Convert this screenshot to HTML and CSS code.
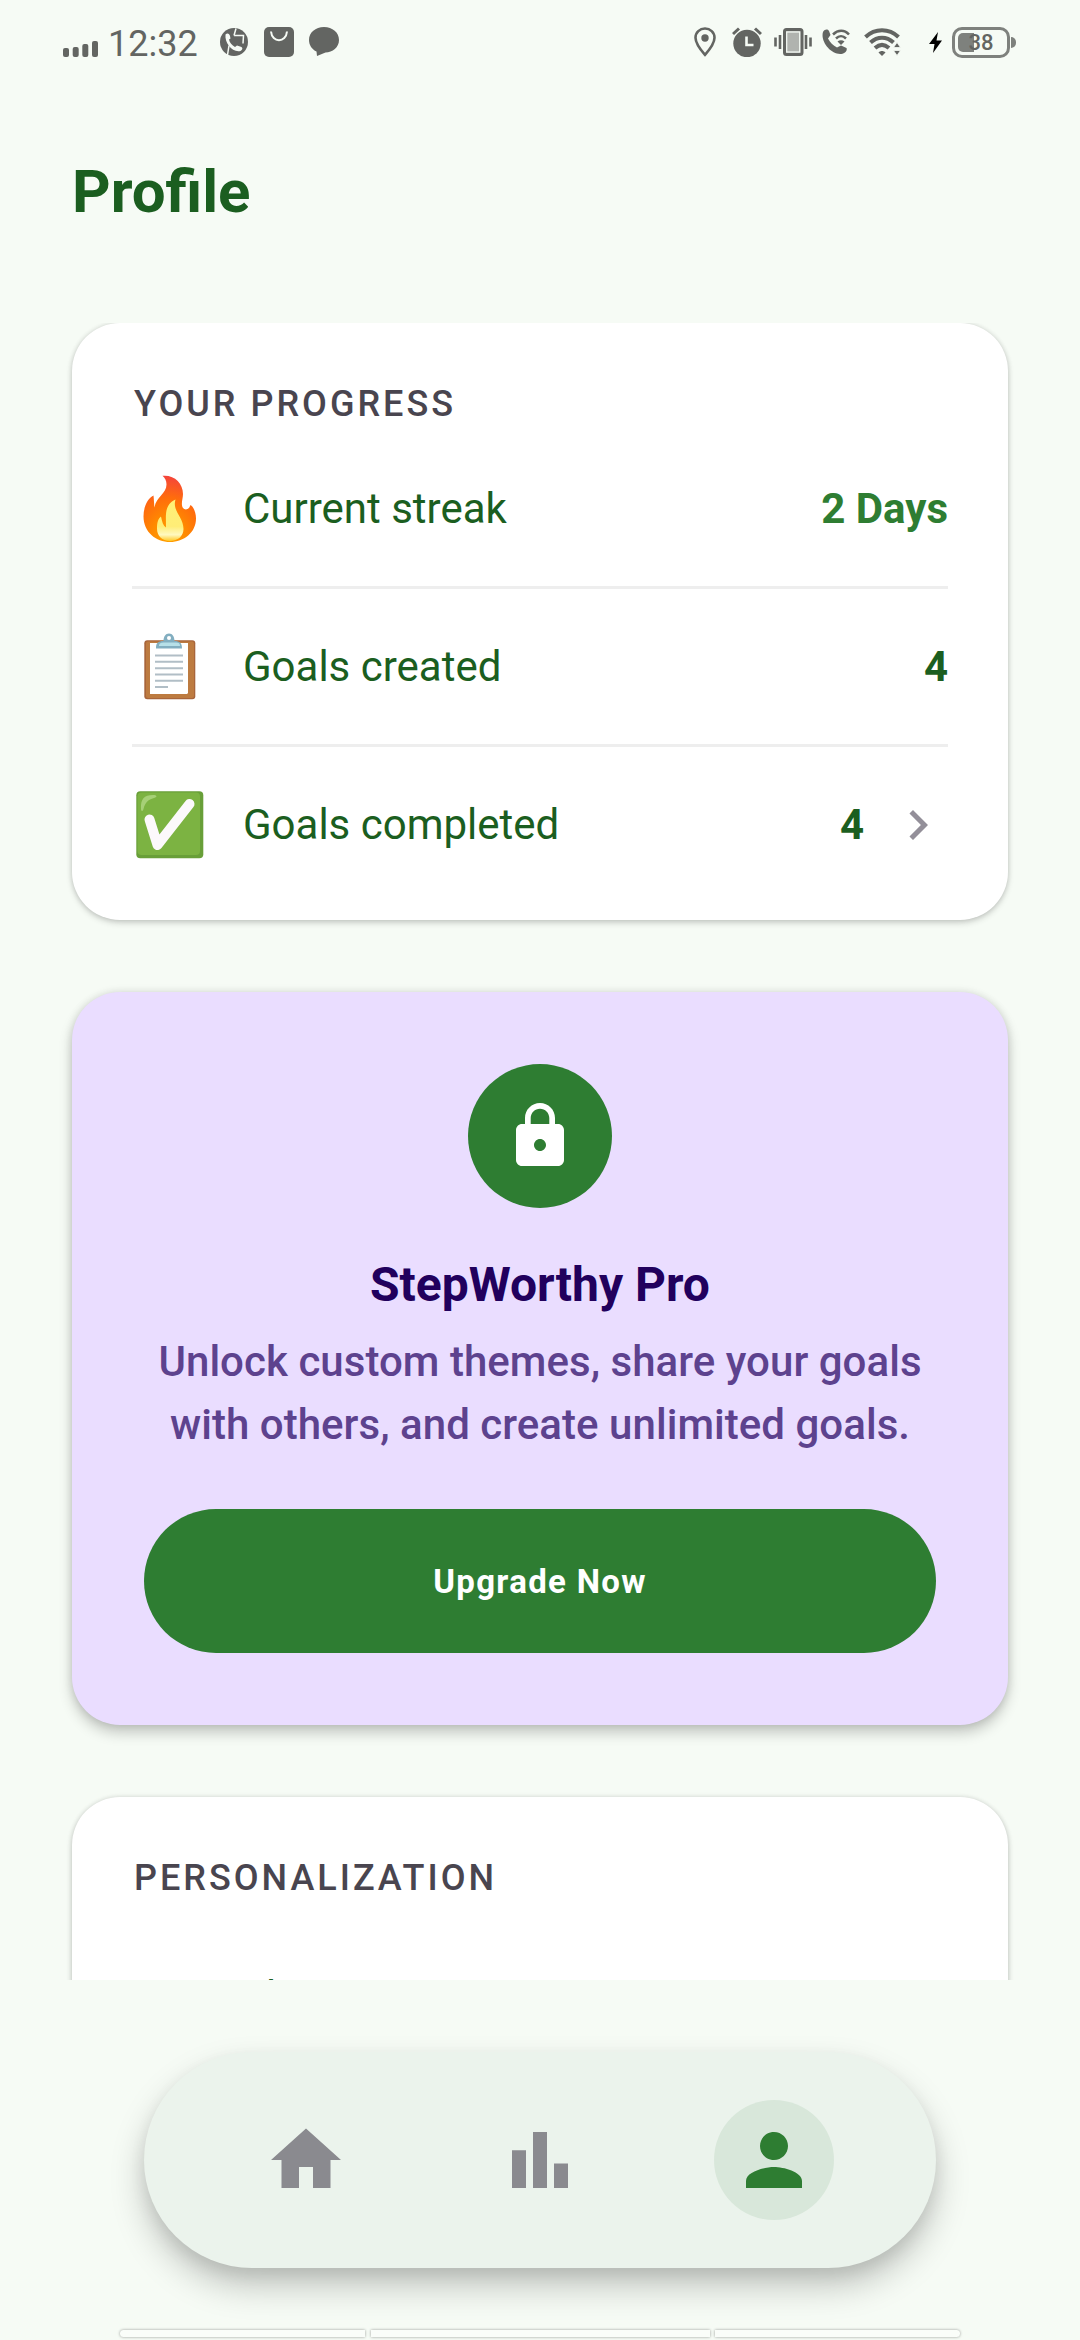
FILE: index.html
```html
<!DOCTYPE html>
<html lang="en">
<head>
<meta charset="utf-8">
<title>Profile</title>
<link rel="stylesheet" href="styles.css">
</head>
<body>
<div class="screen">
  <header class="status">
    <svg class="signal" width="36" height="28" viewBox="0 0 36 28" fill="#636562"><rect x="0" y="19" width="6" height="9" rx="2"/><rect x="9.700" y="18" width="6" height="10" rx="2"/><rect x="19.300" y="15" width="6" height="13" rx="2"/><rect x="29" y="12" width="6" height="16" rx="2"/></svg>
    <span class="clock">12:32</span>
    <svg class="i-call" width="28" height="28" viewBox="0 0 28 28"><circle cx="14" cy="14" r="14" fill="#636562"/><path d="M5.500 6.500c2-2 4-.5 4.500 1.500l.5 2.500-1.500 1c.5 3 3 6 6 7.500l2-1.500 4.500 1.500c1.500 1 1 3-1 4-8 2-16-8-15-16.500z" fill="#f6fbf5"/><path d="M14 7.500h9.500l-.5 8M16 .5l-2 7M9 17.500L7.500 27" fill="none" stroke="#f6fbf5" stroke-width="1.500"/></svg>
    <svg class="i-bag" width="30" height="30" viewBox="0 0 30 30"><rect width="30" height="30" rx="5" fill="#636562"/><path d="M7 4.500c1 11.500 15 11.500 16 0" fill="none" stroke="#f6fbf5" stroke-width="2"/></svg>
    <svg class="i-chat" width="30" height="30" viewBox="0 0 30 30"><path d="M15 0c8.500 0 15 5.500 15 13s-6.500 12.500-13.500 12.500L8 29l-.5-4.500C3 22.500 0 18 0 13 0 5.500 6.500 0 15 0z" fill="#636562"/></svg>
    <span class="grow"></span>
    <svg class="i-pin" width="22" height="30" viewBox="0 0 22 30"><path d="M11 1.500c-5.200 0-9.500 4-9.500 9.200C1.500 17 11 27.800 11 27.800s9.500-10.800 9.500-17.100c0-5.200-4.300-9.200-9.500-9.200z" fill="none" stroke="#636562" stroke-width="2.600"/><circle cx="11" cy="11" r="3.700" fill="#636562"/></svg>
    <svg class="i-alarm" width="30" height="30" viewBox="0 0 30 30"><circle cx="15" cy="16.500" r="13.700" fill="#636562"/><path d="M1 7l6-5.500M29 7l-6-5.500" stroke="#636562" stroke-width="3"/><path d="M14.500 9.500v8.500h7" fill="none" stroke="#f6fbf5" stroke-width="2.600"/></svg>
    <svg class="i-vib" width="38" height="28" viewBox="0 0 38 28"><rect x="10.500" y="1.500" width="17.500" height="25" rx="2" fill="#b0b3af" stroke="#636562" stroke-width="3"/><rect x="12.700" y="4" width="13" height="20" fill="none" stroke="#f6fbf5" stroke-width="1.200"/><path d="M1.500 9.500v9M36.500 9.500v9" stroke="#636562" stroke-width="2.600"/><path d="M6 7v14M32 7v14" stroke="#636562" stroke-width="2.600"/></svg>
    <svg class="i-wcall" width="28" height="26" viewBox="0 0 28 26"><path d="M1 3C3 0 5.500 0 7 2l1.500 4L6 9.500c2 4 5 7 9 9l4-2 5.500 2.500c1 2-1 5-4 5.700C10 27-2 13 1 3z" fill="#636562"/><path d="M11 5.500c5-5 11.500-5 16 0M14 9.500c3-3 7-3 10 0" fill="none" stroke="#636562" stroke-width="2.500"/><path d="M15.500 12.500c2-1.800 5-1.800 7 0L19 16z" fill="#636562"/></svg>
    <svg class="i-wifi" width="38" height="28" viewBox="0 0 38 28"><path d="M1.500 9c9.500-9 23.500-9 33 0M6.500 14.500c7-6.500 16-6.500 23 0M11 20c4.500-4 9.500-4 14 0" fill="none" stroke="#636562" stroke-width="4"/><path d="M14.500 24.500c2-2 5-2 7 0L18 28z" fill="#636562"/><path d="M29.500 19.500l3.500-5 3.500 5zM29.500 22.500l3.500 5 3.500-5z" fill="#636562" stroke="#f6fbf5" stroke-width=".8"/></svg>
    <svg class="i-bolt" width="13" height="21" viewBox="0 0 13 21"><path d="M9 0L0 12h5.500L4 21l9-12.500H7.500z"/></svg>
    <div class="battery"><span class="level"></span><span class="pct">38</span></div>
    <span class="nub"></span>
  </header>

  <h1>Profile</h1>

  <main class="scroll">
    <section class="card progress">
      <h2>YOUR PROGRESS</h2>
      <div class="row">
        <svg class="emoji" viewBox="0 0 68 68"><defs><radialGradient id="f1" cx=".48" cy=".95" r=".95"><stop offset="0" stop-color="#ffa000"/><stop offset=".35" stop-color="#ff8a00"/><stop offset=".65" stop-color="#ff6d0c"/><stop offset="1" stop-color="#f4433c"/></radialGradient><linearGradient id="f2" x1="0" y1="0" x2="0" y2="1"><stop offset="0" stop-color="#fff176"/><stop offset=".65" stop-color="#ffed77"/><stop offset=".85" stop-color="#fff9c0"/><stop offset="1" stop-color="#ffca28"/></linearGradient></defs><path d="M26.500.8C38-.5 47 8 47 19c0 5-2.500 10 0 14 2 2.500 6 1.500 7-2l.5-1C57 31 60 37 60 43.500 60 57.500 48 67 34 67S7.500 57 7.500 41.500C7.500 32 11.500 23.500 17.500 20.500c.5 4 .5 9 1 12C20 22 30.500 18.500 30.500 9.500 30.500 5.500 29 3 26.500.8z" fill="url(#f1)"/><path d="M39.500 24.500C36 36 47.500 42 47.500 54c0 7-5.500 12-13.500 12s-13-5-13-12.500c0-6 1-9.500 4-12 1 5 2 9 5 11C30 40 28 30 39.500 24.500z" fill="url(#f2)"/></svg>
        <span class="label">Current streak</span><span class="value bright">2 Days</span>
      </div>
      <div class="row">
        <svg class="emoji" viewBox="0 0 68 68"><rect x="8.300" y="7.300" width="51" height="59" rx="3" fill="#a8653b"/><rect x="10" y="8.500" width="48" height="56.500" rx="2" fill="#bd7b40"/><path d="M14 10h38v50l-1 1H14z" fill="#fff"/><path d="M19 22.500h28M19 28.700h28M19 35.200h28M19 41.500h28M19 47.800h28M19 54h13" stroke="#b1bec6" stroke-width="1.900"/><path d="M20 15c0-5 2-7 7.500-7 0-4 2-7.500 5.500-7.500s5.500 3.500 5.500 7.500c5.500 0 7.500 2 7.500 7.500H20z" fill="#82aec0"/><path d="M23 13c0-3 2-3.500 5-3.500h12c3 0 4 1 4 3.500z" fill="#b7e0e8"/><circle cx="33" cy="5" r="2" fill="#fff"/></svg>
        <span class="label">Goals created</span><span class="value">4</span>
      </div>
      <div class="row">
        <svg class="emoji" viewBox="0 0 68 68"><rect x=".3" y=".3" width="67" height="67" rx="4" fill="#689f38"/><rect x="1.500" y="1.500" width="62.500" height="62.500" rx="4" fill="#7cb342"/><path d="M13.500 28.500L21.500 54 53.500 13" fill="none" stroke="#fcf9fb" stroke-width="10" stroke-linecap="round" stroke-linejoin="round"/><path d="M5 18C4.500 8 8 4 17 4c4 0 5 2 1 3C12 8.500 9 12 7.500 18c-.5 2.500-2.500 2.500-2.500 0z" fill="#b4d98a" opacity=".75"/></svg>
        <span class="label">Goals completed</span><span class="value">4</span>
        <svg class="chev" width="60" height="60" viewBox="0 0 24 24"><path d="M10 6L8.590 7.410 13.170 12l-4.580 4.590L10 18l6-6z" fill="#938f99"/></svg>
      </div>
    </section>

    <section class="card pro">
      <div class="lock"><svg width="72" height="72" viewBox="0 0 24 24" fill="#fff"><path d="M18 8h-1V6c0-2.760-2.240-5-5-5S7 3.240 7 6v2H6c-1.100 0-2 .9-2 2v10c0 1.100.9 2 2 2h12c1.100 0 2-.9 2-2V10c0-1.100-.9-2-2-2zm-6 9c-1.100 0-2-.9-2-2s.9-2 2-2 2 .9 2 2-.9 2-2 2zm3.100-9H8.900V6c0-1.710 1.390-3.100 3.100-3.100 1.710 0 3.100 1.390 3.100 3.100v2z"/></svg></div>
      <h3>StepWorthy Pro</h3>
      <p>Unlock custom themes, share your goals<br>with others, and create unlimited goals.</p>
      <button>Upgrade Now</button>
    </section>

    <section class="card personal">
      <h2>PERSONALIZATION</h2>
      <div class="row theme"><span class="label">Change icon</span></div>
    </section>
  </main>

  <div class="bottom">
    <nav class="nav">
      <span class="tab"><svg width="84" height="84" viewBox="0 0 24 24" fill="#8a8a8f"><path d="M10 20v-6h4v6h5v-8h3L12 3 2 12h3v8z"/></svg></span>
      <span class="tab"><svg width="84" height="84" viewBox="0 0 24 24" fill="#8a8a8f"><path d="M6.400 9.200h4V20h-4zM18.400 13h4v7h-4zM12.400 4h4v16h-4z" transform="translate(-2.400)"/></svg></span>
      <span class="tab active"><svg width="84" height="84" viewBox="0 0 24 24" fill="#2e7d32"><path d="M12 12c2.210 0 4-1.790 4-4s-1.790-4-4-4-4 1.790-4 4 1.790 4 4 4zm0 2c-2.670 0-8 1.340-8 4v2h16v-2c0-2.660-5.330-4-8-4z"/></svg></span>
    </nav>
    <div class="handle"><span></span><span></span><span></span></div>
  </div>
</div>
</body>
</html>
```
FILE: styles.css
```css
* { box-sizing: border-box; }
body { margin: 0; background: #f6fbf5; font-family: Roboto, sans-serif; }
svg { display: block; flex: none; }
h1, h2, h3, p { margin: 0; }
.screen { width: 1080px; height: 2340px; display: flex; flex-direction: column; overflow: hidden; }

.status { height: 84px; flex: none; display: flex; align-items: center; padding: 0 64px 0 63px; color: #636562; }
.signal { margin-top: 1px; }
.clock { width: 90px; font-size: 36px; margin-left: 9px; line-height: 44px; margin-top: 3px; }
.i-call { margin-left: 22px; }
.i-bag { margin-left: 16px; }
.i-chat { margin-left: 15px; }
.grow { flex: 1; }
.i-alarm { margin-left: 16px; }
.i-vib { margin-left: 12px; }
.i-wcall { margin-left: 10px; }
.i-wifi { margin-left: 14px; }
.i-bolt { margin-left: 27px; }
.battery { width: 58px; height: 31px; margin-left: 10px; border: 3px solid #7e817d; border-radius: 10px; padding: 3px; display: grid; align-items: center; }
.battery span { grid-area: 1 / 1; }
.level { width: 16px; height: 19px; background: #7e817d; border-radius: 5px 0 0 5px; }
.pct { font-size: 22px; line-height: 19px; font-weight: 500; text-align: center; }
.nub { width: 5px; height: 11px; margin-left: 1px; background: #7e817d; border-radius: 0 6px 6px 0; }

h1 { flex: none; height: 239px; padding: 72px 72px 0; font-size: 60px; line-height: 72px; font-weight: 700; color: #1b5e20; }

.scroll { height: 1657px; flex: none; overflow: hidden; padding: 0 72px; display: flex; flex-direction: column; gap: 72px; }
.card { flex: none; background: #fff; border-radius: 48px; box-shadow: 0 3px 6px rgba(0,0,0,.16), 0 0 5px rgba(0,0,0,.12); }
.progress { height: 597px; padding: 0 60px; }
h2 { padding: 60px 0 0 2px; height: 108px; font-size: 36px; line-height: 42px; font-weight: 500; letter-spacing: 3px; color: #49454f; white-space: nowrap; }
.row { height: 158px; display: flex; align-items: center; border-bottom: 3px solid #eee; color: #1b5e20; font-size: 42px; }
.row:last-child { border-bottom: 0; height: 155px; }
.emoji { width: 68px; height: 68px; margin-left: 4px; }
.label { margin-left: 39px; flex: 1; }
.value { font-weight: 700; }
.bright { color: #2e7d32; }
.chev { margin-left: 24px; }

.pro { height: 733px; background: #eaddff; padding: 72px; display: flex; flex-direction: column; align-items: center; box-shadow: 0 8px 14px rgba(0,0,0,.2), 0 0 8px rgba(0,0,0,.12); }
.lock { width: 144px; height: 144px; border-radius: 50%; background: #2e7d32; display: flex; align-items: center; justify-content: center; }
h3 { margin-top: 49px; font-size: 48px; line-height: 56px; font-weight: 700; color: #21005d; white-space: nowrap; }
p { margin-top: 17px; font-size: 42px; line-height: 63px; font-weight: 500; letter-spacing: .04px; color: #5d428e; text-align: center; white-space: nowrap; }
button { margin-top: auto; width: 792px; height: 144px; border: 0; border-radius: 72px; background: #2e7d32; color: #fff; font: 700 33px Roboto, sans-serif; letter-spacing: 1.300px; }
.personal { height: 400px; padding: 0 60px; }
.theme { margin-top: 14px; }
.theme .label { margin-left: 107px; }

.bottom { flex: 1; padding: 72px 120px 0; }
.nav { width: 792px; height: 216px; margin: 0 auto; border-radius: 108px; background: #ebf3ec; display: flex; align-items: center; justify-content: space-between; padding: 0 102px; box-shadow: 0 18px 34px rgba(0,0,0,.22), 0 8px 16px rgba(0,0,0,.08); }
.tab { width: 120px; height: 120px; border-radius: 50%; display: flex; align-items: center; justify-content: center; }
.active { background: #d8e7da; }
.handle { display: flex; justify-content: space-between; margin-top: 62px; }
.handle span { height: 7px; background: #fafdf9; box-shadow: 0 0 3px rgba(0,0,0,.4); width: 245px; }
.handle span:nth-child(2) { width: 339px; }
.handle span:first-child { border-radius: 4px 0 0 4px; }
.handle span:last-child { border-radius: 0 4px 4px 0; }
```
